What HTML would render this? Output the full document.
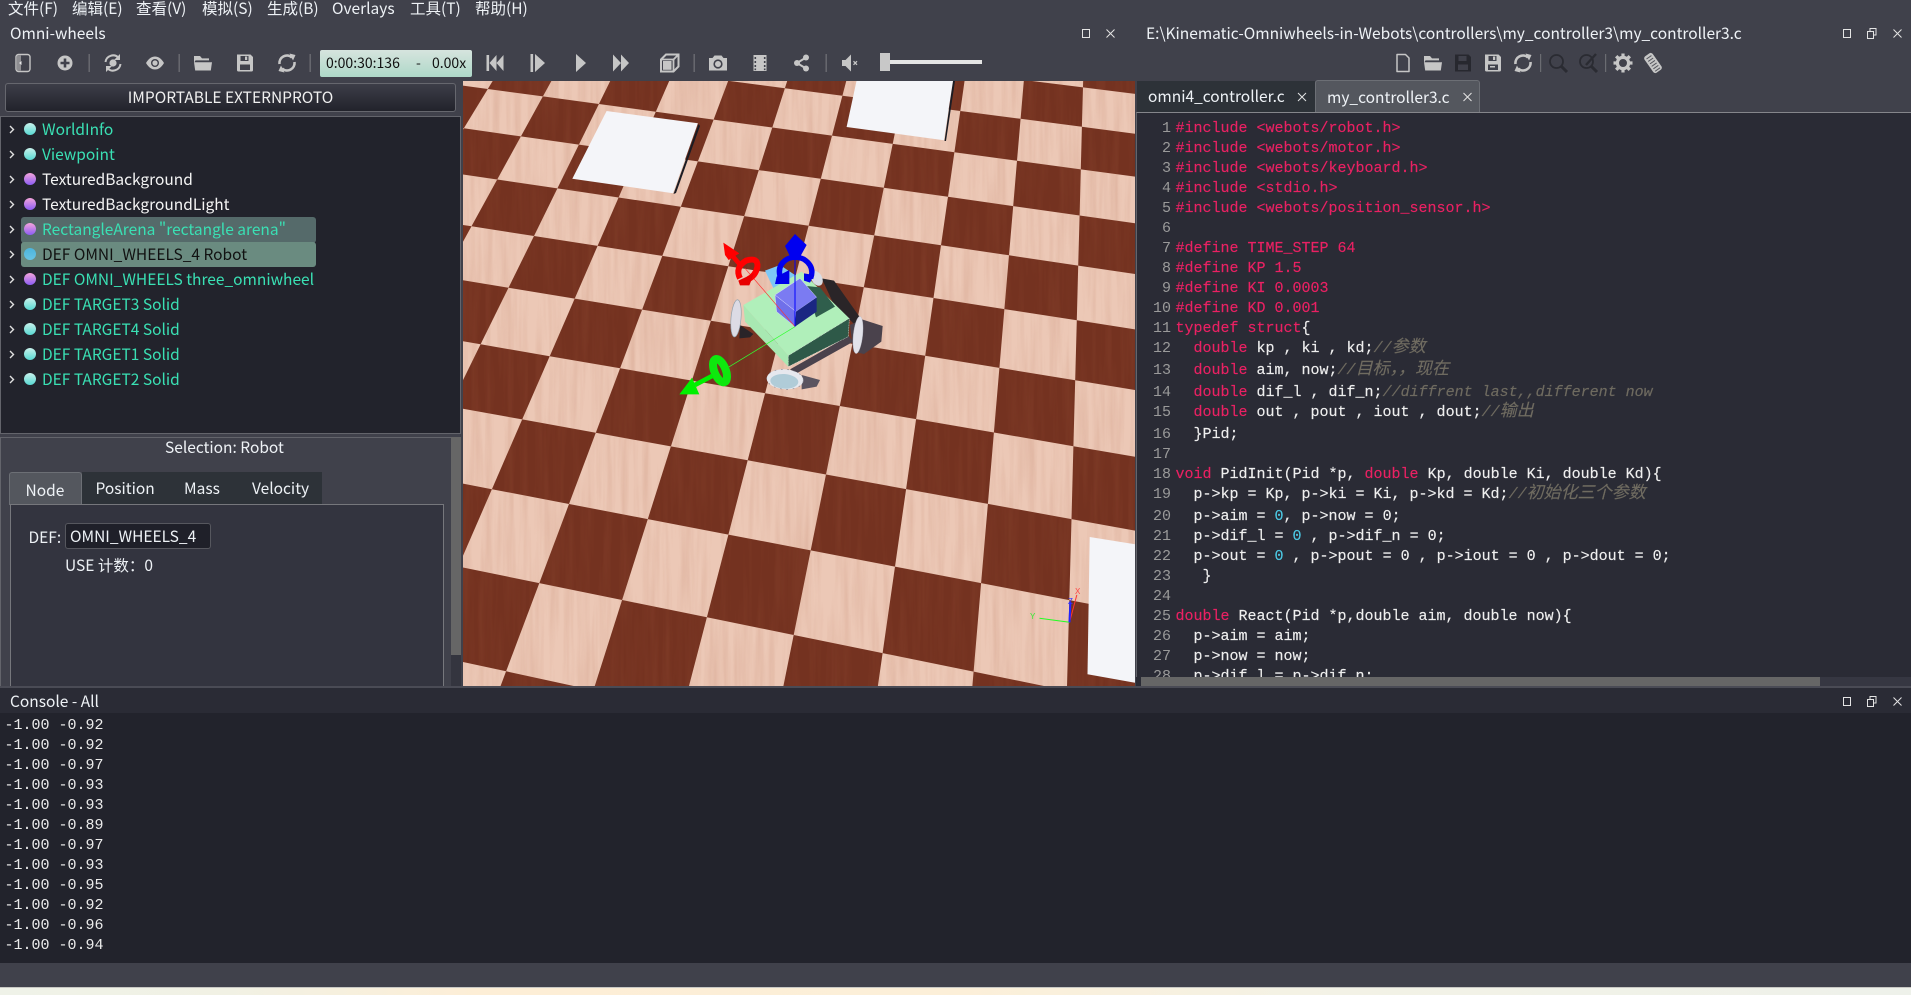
<!DOCTYPE html>
<html lang="zh"><head><meta charset="utf-8"><title>Webots</title>
<style>
html,body{margin:0;padding:0;background:#40414b;width:1911px;height:995px;overflow:hidden;}
#app{position:relative;width:1911px;height:995px;overflow:hidden;background:#40414b;font-family:"Noto Sans CJK SC","Liberation Sans",sans-serif;font-size:15.5px;color:#eef2f6;}
#app>svg{position:absolute;left:0;top:0;}
.t{position:absolute;white-space:pre;line-height:20px;height:20px;}
.box{position:absolute;box-sizing:border-box;}
.g{color:#3ae0b4}.w{color:#f4f4f4}
.c{position:absolute;white-space:pre;line-height:20px;height:20px;left:1175.5px;font:15px/20px "Liberation Mono","Noto Sans CJK SC",monospace;color:#efefef;-webkit-text-stroke:.15px currentColor;}
.n{position:absolute;width:40px;left:1131px;text-align:right;font:15px/20px "Liberation Mono",monospace;color:#9a9a9a;}
.k{color:#ea2163}.z{color:#4cc9e4}.m{color:#6f6b60;font-style:italic}.m b{font-weight:normal;font-size:17px;}
.o{position:absolute;left:4.5px;font:15px/20px "Liberation Mono",monospace;color:#ececec;white-space:pre;}
.dot{position:absolute;left:24px;width:12px;height:12px;border-radius:50%;}
.teal{background:linear-gradient(#c8f2ec,#58d8d2)}
.pur{background:linear-gradient(#f4a4dc,#8c5cf4)}
.blu{background:linear-gradient(#4cb4dc,#68c4e4)}
</style></head><body><div id="app">
<svg width="1911" height="995" viewBox="0 0 1911 995" xmlns="http://www.w3.org/2000/svg">
<defs>
<clipPath id="vp"><rect x="463" y="81" width="672" height="606"/></clipPath>
<filter id="wood" x="0" y="0" width="100%" height="100%"><feTurbulence type="fractalNoise" baseFrequency=".14 .008" numOctaves="3" seed="4"/><feColorMatrix type="matrix" values="0 0 0 0 .4 0 0 0 0 .12 0 0 0 0 .06 1.6 0 0 0 -.6"/></filter>
</defs>
<g clip-path="url(#vp)">
<rect x="463" y="81" width="672" height="606" fill="#ecc8b6"/>
<g id="floor"></g>
<rect x="463" y="81" width="672" height="606" filter="url(#wood)" opacity=".2"/>
<!-- white plates -->
<polygon points="698.5,124 673.5,194 676,193 700,126" fill="#1c1c24"/>
<polygon points="606.6,111 697.9,123.3 673,193.3 572.3,178.7" fill="#f4f5f9"/>
<polygon points="953,81 944.5,141 946,141 955,81" fill="#1c1c24"/>
<polygon points="856.5,81 953,81 943.9,140.3 846.6,127" fill="#f4f5f9"/>
<polygon points="1089.7,537 1135,544.3 1135,682.7 1087.5,674.3" fill="#f4f5f9"/>
<!-- robot -->
<g transform="translate(660 210) scale(.33333)">
<path d="M485 205 L522 212 L602 325 L585 345 L520 280Z" fill="#2a2528"/>
<path d="M570 345 L606 328 L668 348 L664 395 L612 432 L580 425Z" fill="#4a424c"/>
<path d="M390 478 L566 378 L580 395 L410 490Z" fill="#4a424c"/>
<path d="M240 345 L280 372 L270 382 L238 385Z" fill="#2a2428"/>
<path d="M425 495 L480 510 L470 530 L425 538Z" fill="#5a5460"/>
<ellipse cx="470" cy="205" rx="16" ry="24" fill="#d8dce4" transform="rotate(-30 470 205)"/>
<polygon points="315,182 360,165 420,205 345,245" fill="#7cc8f6"/>
<polygon points="250,285 425,185 568,325 385,437" fill="#b0efba"/>
<polygon points="250,285 385,437 385,470 255,335" fill="#a8e8b2"/>
<polygon points="385,437 568,325 565,380 385,470" fill="#2e5948" stroke="#e8f4ec" stroke-width="1.5" stroke-dasharray="3 2"/>
<polygon points="440,228 480,232 525,290 468,322" fill="#2f5e4c"/>
<polygon points="345,255 420,205 470,262 408,305" fill="#7b7bf2" stroke="#d4d4ff" stroke-width="1.5"/>
<polygon points="345,255 408,305 405,350 350,305" fill="#7070ea" stroke="#d4d4ff" stroke-width="1.5"/>
<polygon points="408,305 470,262 470,305 405,350" fill="#1a2682"/>
<ellipse cx="228" cy="325" rx="15" ry="56" fill="#dcdbe4" stroke="#8fa0ac" stroke-width="2" transform="rotate(5 228 325)"/>
<ellipse cx="594" cy="375" rx="14" ry="56" fill="#e2e2ea" stroke="#b8bcc8" stroke-width="1" transform="rotate(6 594 375)"/>
<ellipse cx="375" cy="508" rx="55" ry="30" fill="#e6e8ee" stroke="#8a8a96" stroke-width="2" stroke-dasharray="5 14" transform="rotate(4 375 508)"/>
<ellipse cx="373" cy="514" rx="42" ry="22" fill="#b0ccd8" transform="rotate(4 373 514)"/>
<!-- red handle -->
<line x1="255" y1="175" x2="405" y2="350" stroke="#ff3030" stroke-width="2"/>
<polygon points="190,98 238,130 206,150 195,135" fill="#ff0000"/>
<line x1="215" y1="135" x2="245" y2="170" stroke="#f00" stroke-width="14"/>
<path d="M240 205 Q224 172 258 152 Q296 140 292 172 Q286 198 264 208" fill="none" stroke="#f00" stroke-width="18"/>
<polygon points="235,212 282,190 268,226 240,226" fill="#e80000"/>
<!-- blue handle -->
<line x1="405" y1="140" x2="405" y2="350" stroke="#0000ff" stroke-width="3"/>
<polygon points="405,72 440,105 415,150 395,150 375,108" fill="#0000f0"/>
<path d="M366 215 Q345 170 380 148 Q405 135 432 148 Q465 170 452 205" fill="none" stroke="#0000f0" stroke-width="16"/>
<polygon points="350,200 388,180 388,222 345,222" fill="#0000e8"/>
<polygon points="432,190 462,195 450,218 432,212" fill="#0000e8"/>
<!-- green handle -->
<line x1="405" y1="350" x2="200" y2="475" stroke="#30ff30" stroke-width="2"/>
<ellipse cx="180" cy="482" rx="17" ry="37" fill="none" stroke="#0ee80e" stroke-width="24" transform="rotate(-22 180 482)"/>
<line x1="158" y1="497" x2="105" y2="525" stroke="#00f000" stroke-width="14"/>
<polygon points="58,553 118,553 96,503" fill="#00f000"/>
</g>
<!-- mini axes -->
<line x1="1069.5" y1="622.3" x2="1076.8" y2="595" stroke="#f33" stroke-width="1"/>
<line x1="1069.5" y1="622.3" x2="1039.5" y2="618.3" stroke="#2f2" stroke-width="1"/>
<line x1="1069.5" y1="622.3" x2="1070.4" y2="601.7" stroke="#22f" stroke-width="2"/>
<text x="1075" y="594" font-family="Liberation Sans" font-size="8" fill="#f44">X</text>
<text x="1030" y="619" font-family="Liberation Sans" font-size="8" fill="#3e3">Y</text>
<text x="1068" y="604" font-family="Liberation Sans" font-size="8" fill="#33f">Z</text>
</g>
<!-- toolbar icons left -->
<g fill="#c6c6c6" stroke="none">
<g transform="translate(23 63)"><rect x="-7" y="-8.5" width="14" height="17" rx="2.5" fill="none" stroke="#c6c6c6" stroke-width="1.4"/><path d="M-6-7.5H-2V7.5H-6Z" fill="#8e8e92"/><path d="M-1.5-2-4 0l2.5 2Z" fill="#e8e8e8"/></g>
<g transform="translate(65 63)"><circle r="7.5"/><path d="M-1.3-4.5h2.6v3.2h3.2v2.6H1.3v3.2h-2.6V1.3h-3.2v-2.6h3.2Z" fill="#40414b"/></g>
<g transform="translate(113 63)"><circle r="3.6"/><path d="M-7.5-1A7.6 7.6 0 0 1 5.5-5.3M7.5 1A7.6 7.6 0 0 1-5.5 5.3" fill="none" stroke="#c6c6c6" stroke-width="2"/><path d="M7-9V-3H1ZM-7 9V3H-1Z"/></g>
<g transform="translate(155 63)"><path d="M-9 0C-6-5-3-6.5 0-6.5S6-5 9 0C6 5 3 6.5 0 6.5S-6 5-9 0Z"/><circle r="4" fill="#40414b"/><circle r="2.6"/></g>
<g transform="translate(203 63)"><path d="M-9-7h6l2 2.4h7V-2.6H-7.5L-9 0Z"/><path d="M-9-.8H9L7.8 7.5H-7.8Z"/></g>
<g transform="translate(245 63)"><path d="M-8-8.5H5.5L8-6V7a1.5 1.5 0 0 1-1.5 1.5h-13A1.5 1.5 0 0 1-8 7Z"/><path d="M-4.5-7h8v5h-8ZM-5 1.5h10v5.5h-10Z" fill="#40414b"/><rect x="0" y="-6.5" width="2.2" height="3.5"/></g>
<g transform="translate(287 63)"><path d="M-7.5 1A7.5 7.5 0 0 1 5-5.5M7.5-1A7.5 7.5 0 0 1-5 5.5" fill="none" stroke="#c6c6c6" stroke-width="2.6"/><path d="M2.5-9.5 8.5-8 6-2.5ZM-2.5 9.5-8.5 8-6 2.5Z"/></g>
<g transform="translate(495 63)"><rect x="-8.5" y="-8" width="2.6" height="16"/><path d="M-5.5 0 1.5-8V8Z"/><path d="M1.5 0 8.5-8V8Z"/></g>
<g transform="translate(538 63)"><rect x="-7.5" y="-9" width="2.6" height="18"/><path d="M-3-9 7 0-3 9Z"/></g>
<g transform="translate(580 63)"><path d="M-4-9 6 0-4 9Z"/></g>
<g transform="translate(621 63)"><path d="M-8-8.5 0 0-8 8.5Z"/><path d="M0-8.5 8 0 0 8.5Z"/></g>
<g transform="translate(670 63)"><path d="M-9-3.5-4-8.5H8.5V3.5L3.5 8.5H-9Z" fill="none" stroke="#c6c6c6" stroke-width="2"/><path d="M-9-3.5H3.5V8.5M3.5-3.5 8.5-8.5" fill="none" stroke="#c6c6c6" stroke-width="1.8"/><rect x="-7" y="-2" width="8.5" height="8.8" fill="#c6c6c6"/></g>
<g transform="translate(718 63)"><path d="M-9-5h3.5L-3.5-7.5h7L5.5-5H9V7.5H-9Z"/><circle cy="1" r="4.6" fill="#40414b"/><circle cy="1" r="3"/></g>
<g transform="translate(760 63)"><rect x="-6.5" y="-8" width="13" height="16"/><path d="M-5.5-6h1.6v2h-1.6ZM-5.5-2h1.6v2h-1.6ZM-5.5 2h1.6v2h-1.6ZM-5.5 5.5h1.6v1.6h-1.6ZM3.9-6h1.6v2H3.9ZM3.9-2h1.6v2H3.9ZM3.9 2h1.6v2H3.9ZM3.9 5.5h1.6v1.6H3.9Z" fill="#40414b"/></g>
<g transform="translate(802 63)"><circle cx="4" cy="-5.5" r="3"/><circle cx="4" cy="5.5" r="3"/><circle cx="-5" cy="0" r="3"/><path d="M4-5.5-5 0 4 5.5" fill="none" stroke="#c6c6c6" stroke-width="2"/></g>
<g transform="translate(849 63)"><path d="M-7-3h3.5L2-8.5V8.5L-3.5 3H-7Z"/><path d="M4.5-1.8 8 1.8M8-1.8 4.5 1.8" stroke="#c6c6c6" stroke-width="1.3" fill="none"/></g>
</g>
<!-- separators -->
<g fill="#6b6c72"><rect x="88.5" y="54" width="1.4" height="18"/><rect x="178.5" y="54" width="1.4" height="18"/><rect x="309.5" y="54" width="1.4" height="18"/><rect x="693.5" y="54" width="1.4" height="18"/><rect x="825.5" y="54" width="1.4" height="18"/><rect x="1540" y="54" width="1.2" height="18"/><rect x="1605" y="54" width="1.2" height="18"/></g>
<!-- slider -->
<rect x="890" y="60" width="92" height="4" fill="#e4e4e4"/><rect x="880" y="53" width="10" height="18" fill="#c8c8c8"/>
<!-- right toolbar icons -->
<g fill="#c6c6c6">
<g transform="translate(1403 63)"><path d="M-6-8.5H2.5L6-5V8.5H-6Z" fill="none" stroke="#c6c6c6" stroke-width="1.5" stroke-linejoin="round"/></g>
<g transform="translate(1433 63)"><path d="M-9-7h6l2 2.4h7V-2.6H-7.5L-9 0Z"/><path d="M-9-.8H9L7.8 7.5H-7.8Z"/></g>
<g transform="translate(1463 63)" fill="#27282f"><path d="M-8-8.5H5.5L8-6V8.5H-8Z"/><path d="M-4.5-7h8v5h-8ZM-5 1.5h10v5.5h-10Z" fill="#40414b"/></g>
<g transform="translate(1493 63)"><path d="M-8-8.5H5.5L8-6V7a1.5 1.5 0 0 1-1.5 1.5h-13A1.5 1.5 0 0 1-8 7Z"/><path d="M-4.5-7h8v5h-8ZM-5 1.5h10v5.5h-10Z" fill="#40414b"/><rect x="0" y="-6.5" width="2.2" height="3.5"/><rect x="-3" y="3" width="5" height="1.5"/></g>
<g transform="translate(1523 63)"><path d="M-7.5 1A7.5 7.5 0 0 1 5-5.5M7.5-1A7.5 7.5 0 0 1-5 5.5" fill="none" stroke="#c6c6c6" stroke-width="2.6"/><path d="M2.5-9.5 8.5-8 6-2.5ZM-2.5 9.5-8.5 8-6 2.5Z"/></g>
<g transform="translate(1558 63)" fill="none" stroke="#2a2b32" stroke-width="1.8"><circle cx="-1.5" cy="-1.5" r="6.5"/><path d="M3 3 9 9" stroke-width="3"/></g>
<g transform="translate(1588 63)" fill="none" stroke="#2a2b32" stroke-width="1.8"><circle cx="-1.5" cy="-1.5" r="6.5"/><path d="M3 3 9 9" stroke-width="3"/><path d="M8-9-2 2" stroke-width="2.4"/></g>
<g transform="translate(1623 63)"><circle r="5.6" fill="none" stroke="#c6c6c6" stroke-width="3.2"/><path d="M-1.6-9.5H1.6V-6H-1.6ZM-1.6 6H1.6V9.5H-1.6ZM-9.5-1.6H-6V1.6H-9.5ZM6-1.6H9.5V1.6H6Z"/><path d="M-8-5.6-5.6-8-3.6-6-6-3.6ZM5.6-8 8-5.6 6-3.6 3.6-6ZM-8 5.6-6 3.6-3.6 6-5.6 8ZM8 5.6 5.6 8 3.6 6 6 3.6Z"/></g>
<g transform="translate(1653 63) rotate(-35)"><rect x="-5" y="-10" width="10" height="20" rx="2.5"/><path d="M-3-7H3M-3-4H3M-3-1H3M-3 2H3M-3 5H3M-3 8H3" stroke="#53545c" stroke-width="1" fill="none"/></g>
</g>
</svg>

<!-- menu -->
<span class="t" style="left:8px;top:-2px">文件(F)</span>
<span class="t" style="left:72px;top:-2px">编辑(E)</span>
<span class="t" style="left:136px;top:-2px">查看(V)</span>
<span class="t" style="left:202px;top:-2px">模拟(S)</span>
<span class="t" style="left:267px;top:-2px">生成(B)</span>
<span class="t" style="left:332px;top:-2px">Overlays</span>
<span class="t" style="left:410px;top:-2px">工具(T)</span>
<span class="t" style="left:475px;top:-2px">帮助(H)</span>
<span class="t" style="left:10px;top:23px">Omni-wheels</span>
<span class="t" style="left:1146px;top:23px">E:\Kinematic-Omniwheels-in-Webots\controllers\my_controller3\my_controller3.c</span>

<!-- time -->
<div class="box" style="left:320px;top:50px;width:152px;height:27px;border-radius:2px;background:linear-gradient(#d6e4de,#aed8c8)"></div>
<span class="t" style="left:326px;top:53px;color:#111;font-size:14px">0:00:30:136</span>
<span class="t" style="left:416px;top:53px;color:#111;font-size:14px">-</span>
<span class="t" style="left:432px;top:53px;color:#111;font-size:14px">0.00x</span>

<!-- importable button -->
<div class="box" style="left:5px;top:83px;width:451px;height:29px;border:1px solid #66676e;border-radius:3px;background:linear-gradient(#3d3e48,#22232b);text-align:center;line-height:27px;color:#f0f0f0">IMPORTABLE EXTERNPROTO</div>

<!-- tree -->
<div class="box" style="left:0;top:116px;width:461px;height:318px;background:#22232c;border:1px solid #63646b"></div>
<div class="box" style="left:21px;top:217px;width:295px;height:26px;background:#556a6a;border-radius:3px"></div>
<div class="box" style="left:21px;top:242px;width:295px;height:25px;background:#6a8b80;border-radius:3px"></div>
<i class="dot teal" style="top:123px"></i><span class="t g" style="left:42px;top:119px">WorldInfo</span>
<i class="dot teal" style="top:148px"></i><span class="t g" style="left:42px;top:144px">Viewpoint</span>
<i class="dot pur" style="top:173px"></i><span class="t w" style="left:42px;top:169px">TexturedBackground</span>
<i class="dot pur" style="top:198px"></i><span class="t w" style="left:42px;top:194px">TexturedBackgroundLight</span>
<i class="dot pur" style="top:223px"></i><span class="t g" style="left:42px;top:219px">RectangleArena "rectangle arena"</span>
<i class="dot blu" style="top:248px"></i><span class="t" style="left:42px;top:244px;color:#111">DEF OMNI_WHEELS_4 Robot</span>
<i class="dot pur" style="top:273px"></i><span class="t g" style="left:42px;top:269px">DEF OMNI_WHEELS three_omniwheel</span>
<i class="dot teal" style="top:298px"></i><span class="t g" style="left:42px;top:294px">DEF TARGET3 Solid</span>
<i class="dot teal" style="top:323px"></i><span class="t g" style="left:42px;top:319px">DEF TARGET4 Solid</span>
<i class="dot teal" style="top:348px"></i><span class="t g" style="left:42px;top:344px">DEF TARGET1 Solid</span>
<i class="dot teal" style="top:373px"></i><span class="t g" style="left:42px;top:369px">DEF TARGET2 Solid</span>

<!-- selection panel -->
<div class="box" style="left:0;top:437px;width:461px;height:250px;border-left:1px solid #63646b;border-top:1px solid #63646b"></div>
<div class="box" style="left:451px;top:437px;width:10px;height:218px;background:#666"></div>
<div class="box" style="left:451px;top:655px;width:10px;height:32px;background:#34353f"></div>
<span class="t" style="left:165px;top:437px">Selection: Robot</span>
<div class="box" style="left:82px;top:472px;width:240px;height:32px;background:#2d3238"></div>
<div class="box" style="left:9px;top:472px;width:73px;height:33px;background:#54575e;border-radius:3px 3px 0 0;border:1px solid #6c6f75;border-bottom:none"></div>
<div class="box" style="left:9.5px;top:504px;width:434px;height:183px;background:#33343f;border:1px solid #76777c;border-bottom:none"></div>
<span class="t" style="left:25.5px;top:480px">Node</span>
<span class="t" style="left:95.5px;top:478px">Position</span>
<span class="t" style="left:184px;top:478px">Mass</span>
<span class="t" style="left:252px;top:478px">Velocity</span>
<span class="t" style="left:28.5px;top:527px">DEF:</span>
<div class="box" style="left:65px;top:523px;width:146px;height:26px;background:#1f2029;border:1px solid #56575e;border-radius:3px"></div>
<span class="t" style="left:70px;top:526px">OMNI_WHEELS_4</span>
<span class="t" style="left:65px;top:555px">USE 计数：0</span>

<!-- tabs -->
<div class="box" style="left:1137px;top:81px;width:178px;height:31px;background:#2d3238"></div>
<div class="box" style="left:1315px;top:80px;width:165px;height:32px;background:#54575e;border:1px solid #6c6f75;border-bottom:none;border-radius:3px 3px 0 0"></div>
<span class="t" style="left:1148px;top:86px">omni4_controller.c</span>
<span class="t" style="left:1327px;top:87px">my_controller3.c</span>

<!-- code -->
<div class="box" style="left:1136px;top:112px;width:775px;height:565px;background:#2a2b35;border-top:1px solid #85868b;border-left:1px solid #63646b;overflow:hidden">
<div style="position:absolute;left:-1137px;top:-112px;width:1911px;height:690px;">
<span class="n" style="top:118px">1</span><span class="c k" style="top:118px">#include &lt;webots/robot.h&gt;</span>
<span class="n" style="top:138px">2</span><span class="c k" style="top:138px">#include &lt;webots/motor.h&gt;</span>
<span class="n" style="top:158px">3</span><span class="c k" style="top:158px">#include &lt;webots/keyboard.h&gt;</span>
<span class="n" style="top:178px">4</span><span class="c k" style="top:178px">#include &lt;stdio.h&gt;</span>
<span class="n" style="top:198px">5</span><span class="c k" style="top:198px">#include &lt;webots/position_sensor.h&gt;</span>
<span class="n" style="top:218px">6</span>
<span class="n" style="top:238px">7</span><span class="c k" style="top:238px">#define TIME_STEP 64</span>
<span class="n" style="top:258px">8</span><span class="c k" style="top:258px">#define KP 1.5</span>
<span class="n" style="top:278px">9</span><span class="c k" style="top:278px">#define KI 0.0003</span>
<span class="n" style="top:298px">10</span><span class="c k" style="top:298px">#define KD 0.001</span>
<span class="n" style="top:318px">11</span><span class="c" style="top:318px"><span class="k">typedef struct</span>{</span>
<span class="n" style="top:338px">12</span><span class="c" style="top:338px">  <span class="k">double</span> kp , ki , kd;<span class="m">//<b>参数</b></span></span>
<span class="n" style="top:360px">13</span><span class="c" style="top:360px">  <span class="k">double</span> aim, now;<span class="m">//<b>目标，，现在</b></span></span>
<span class="n" style="top:382px">14</span><span class="c" style="top:382px">  <span class="k">double</span> dif_l , dif_n;<span class="m">//diffrent last,,different now</span></span>
<span class="n" style="top:402px">15</span><span class="c" style="top:402px">  <span class="k">double</span> out , pout , iout , dout;<span class="m">//<b>输出</b></span></span>
<span class="n" style="top:424px">16</span><span class="c" style="top:424px">  }Pid;</span>
<span class="n" style="top:444px">17</span>
<span class="n" style="top:464px">18</span><span class="c" style="top:464px"><span class="k">void</span> PidInit(Pid *p, <span class="k">double</span> Kp, double Ki, double Kd){</span>
<span class="n" style="top:484px">19</span><span class="c" style="top:484px">  p-&gt;kp = Kp, p-&gt;ki = Ki, p-&gt;kd = Kd;<span class="m">//<b>初始化三个参数</b></span></span>
<span class="n" style="top:506px">20</span><span class="c" style="top:506px">  p-&gt;aim = <span class="z">0</span>, p-&gt;now = 0;</span>
<span class="n" style="top:526px">21</span><span class="c" style="top:526px">  p-&gt;dif_l = <span class="z">0</span> , p-&gt;dif_n = 0;</span>
<span class="n" style="top:546px">22</span><span class="c" style="top:546px">  p-&gt;out = <span class="z">0</span> , p-&gt;pout = 0 , p-&gt;iout = 0 , p-&gt;dout = 0;</span>
<span class="n" style="top:566px">23</span><span class="c" style="top:566px">   }</span>
<span class="n" style="top:586px">24</span>
<span class="n" style="top:606px">25</span><span class="c" style="top:606px"><span class="k">double</span> React(Pid *p,double aim, double now){</span>
<span class="n" style="top:626px">26</span><span class="c" style="top:626px">  p-&gt;aim = aim;</span>
<span class="n" style="top:646px">27</span><span class="c" style="top:646px">  p-&gt;now = now;</span>
<span class="n" style="top:666px">28</span><span class="c" style="top:666px">  p-&gt;dif_l = p-&gt;dif_n;</span>
</div></div>
<div class="box" style="left:1136px;top:677px;width:775px;height:10px;background:#2a2b35"></div>
<div class="box" style="left:1141px;top:677px;width:770px;height:9px;background:#363742"></div>
<div class="box" style="left:1141px;top:677px;width:679px;height:9px;background:#666"></div>

<!-- console -->
<div class="box" style="left:0;top:686px;width:1911px;height:27px;background:#2a2b35;border-top:2px solid #4a4b55"></div>
<span class="t" style="left:10px;top:691px">Console - All</span>
<div class="box" style="left:0;top:713px;width:1911px;height:250px;background:#22232c"></div>
<span class="o" style="top:716px">-1.00 -0.92</span>
<span class="o" style="top:736px">-1.00 -0.92</span>
<span class="o" style="top:756px">-1.00 -0.97</span>
<span class="o" style="top:776px">-1.00 -0.93</span>
<span class="o" style="top:796px">-1.00 -0.93</span>
<span class="o" style="top:816px">-1.00 -0.89</span>
<span class="o" style="top:836px">-1.00 -0.97</span>
<span class="o" style="top:856px">-1.00 -0.93</span>
<span class="o" style="top:876px">-1.00 -0.95</span>
<span class="o" style="top:896px">-1.00 -0.92</span>
<span class="o" style="top:916px">-1.00 -0.96</span>
<span class="o" style="top:936px">-1.00 -0.94</span>
<div class="box" style="left:0;top:987px;width:1911px;height:8px;background:linear-gradient(90deg,#eff2e8 0,#f1f1e4 12%,#fdeed6 25%,#fcefd8 50%,#f3f2e6 70%,#eef1ea 100%);border-top:1px solid #c8c8c4"></div>

<svg width="1911" height="995" viewBox="0 0 1911 995" style="pointer-events:none" xmlns="http://www.w3.org/2000/svg">
<g fill="none" stroke="#e4e4e4" stroke-width="1">
<rect x="1082.5" y="29.5" width="7" height="8"/><path d="M1106.5 29.5 1114.5 37.5M1114.5 29.5 1106.5 37.5"/>
<rect x="1843.5" y="29.5" width="7" height="8"/><rect x="1867.5" y="31.5" width="6" height="7"/><path d="M1870 31V28.5H1876V35H1874"/><path d="M1893.5 29.5 1901.5 37.5M1901.5 29.5 1893.5 37.5"/>
<rect x="1843.5" y="697.5" width="7" height="8"/><rect x="1867.5" y="699.5" width="6" height="7"/><path d="M1870 699V696.5H1876V703H1874"/><path d="M1893.5 697.5 1901.5 705.5M1901.5 697.5 1893.5 705.5"/>
<path d="M1298 93 1306 101M1306 93 1298 101"/><path d="M1463.5 93 1471.5 101M1471.5 93 1463.5 101"/>
</g>
<g fill="none" stroke="#e0e0e0" stroke-width="1.4">
<path d="M10 126 13.5 129.5 10 133"/><path d="M10 151 13.5 154.5 10 158"/><path d="M10 176 13.5 179.5 10 183"/><path d="M10 201 13.5 204.5 10 208"/><path d="M10 226 13.5 229.5 10 233"/><path d="M10 251 13.5 254.5 10 258"/><path d="M10 276 13.5 279.5 10 283"/><path d="M10 301 13.5 304.5 10 308"/><path d="M10 326 13.5 329.5 10 333"/><path d="M10 351 13.5 354.5 10 358"/><path d="M10 376 13.5 379.5 10 383"/>
</g>
</svg>
</div>
<script>
(function(){
var P=[[0,0,764.8,393.3],[4,0,1073.8,446.7],[0,3,707.3,617.3],[3,3,973.9,671],[-1,3,621.6,600],[4,2,1069.5,600],[-1,1,670.9,446.7],[4,-3,1077.2,265.3],[-4,-5,599.3,103.7],[4,-5,1081.5,169.3],[0,-5,831.6,136]];
var N=8,A=[],i,j,k;
for(i=0;i<N;i++){A[i]=[];for(j=0;j<=N;j++)A[i][j]=0;}
function add(r,b){for(var a=0;a<N;a++){for(var c=0;c<N;c++)A[a][c]+=r[a]*r[c];A[a][N]+=r[a]*b;}}
P.forEach(function(p){var u=p[0],v=p[1],x=p[2]/1000,y=p[3]/1000;add([u,v,1,0,0,0,-u*x,-v*x],x);add([0,0,0,u,v,1,-u*y,-v*y],y);});
for(i=0;i<N;i++){var m=i;for(k=i+1;k<N;k++)if(Math.abs(A[k][i])>Math.abs(A[m][i]))m=k;var t=A[i];A[i]=A[m];A[m]=t;for(k=0;k<N;k++){if(k===i)continue;var f=A[k][i]/A[i][i];for(j=i;j<=N;j++)A[k][j]-=f*A[i][j];}}
var h=[];for(i=0;i<N;i++)h[i]=A[i][N]/A[i][i];
function pt(u,v){var w=h[6]*u+h[7]*v+1;return [(h[0]*u+h[1]*v+h[2])/w*1000,(h[3]*u+h[4]*v+h[5])/w*1000];}
var s="";
for(var u=-9;u<9;u++)for(var v=-9;v<6;v++){
 if(((u+v)%2+2)%2!==0)continue;
 var q=[pt(u,v),pt(u+1,v),pt(u+1,v+1),pt(u,v+1)];
 var xs=q.map(function(a){return a[0]}),ys=q.map(function(a){return a[1]});
 if(Math.max.apply(null,xs)<463||Math.min.apply(null,xs)>1135||Math.max.apply(null,ys)<81||Math.min.apply(null,ys)>687)continue;
 s+='<polygon fill="#743220" points="'+q.map(function(a){return a[0].toFixed(1)+","+a[1].toFixed(1)}).join(" ")+'"/>';
}
document.getElementById("floor").innerHTML=s;
})();
</script>
</body></html>
